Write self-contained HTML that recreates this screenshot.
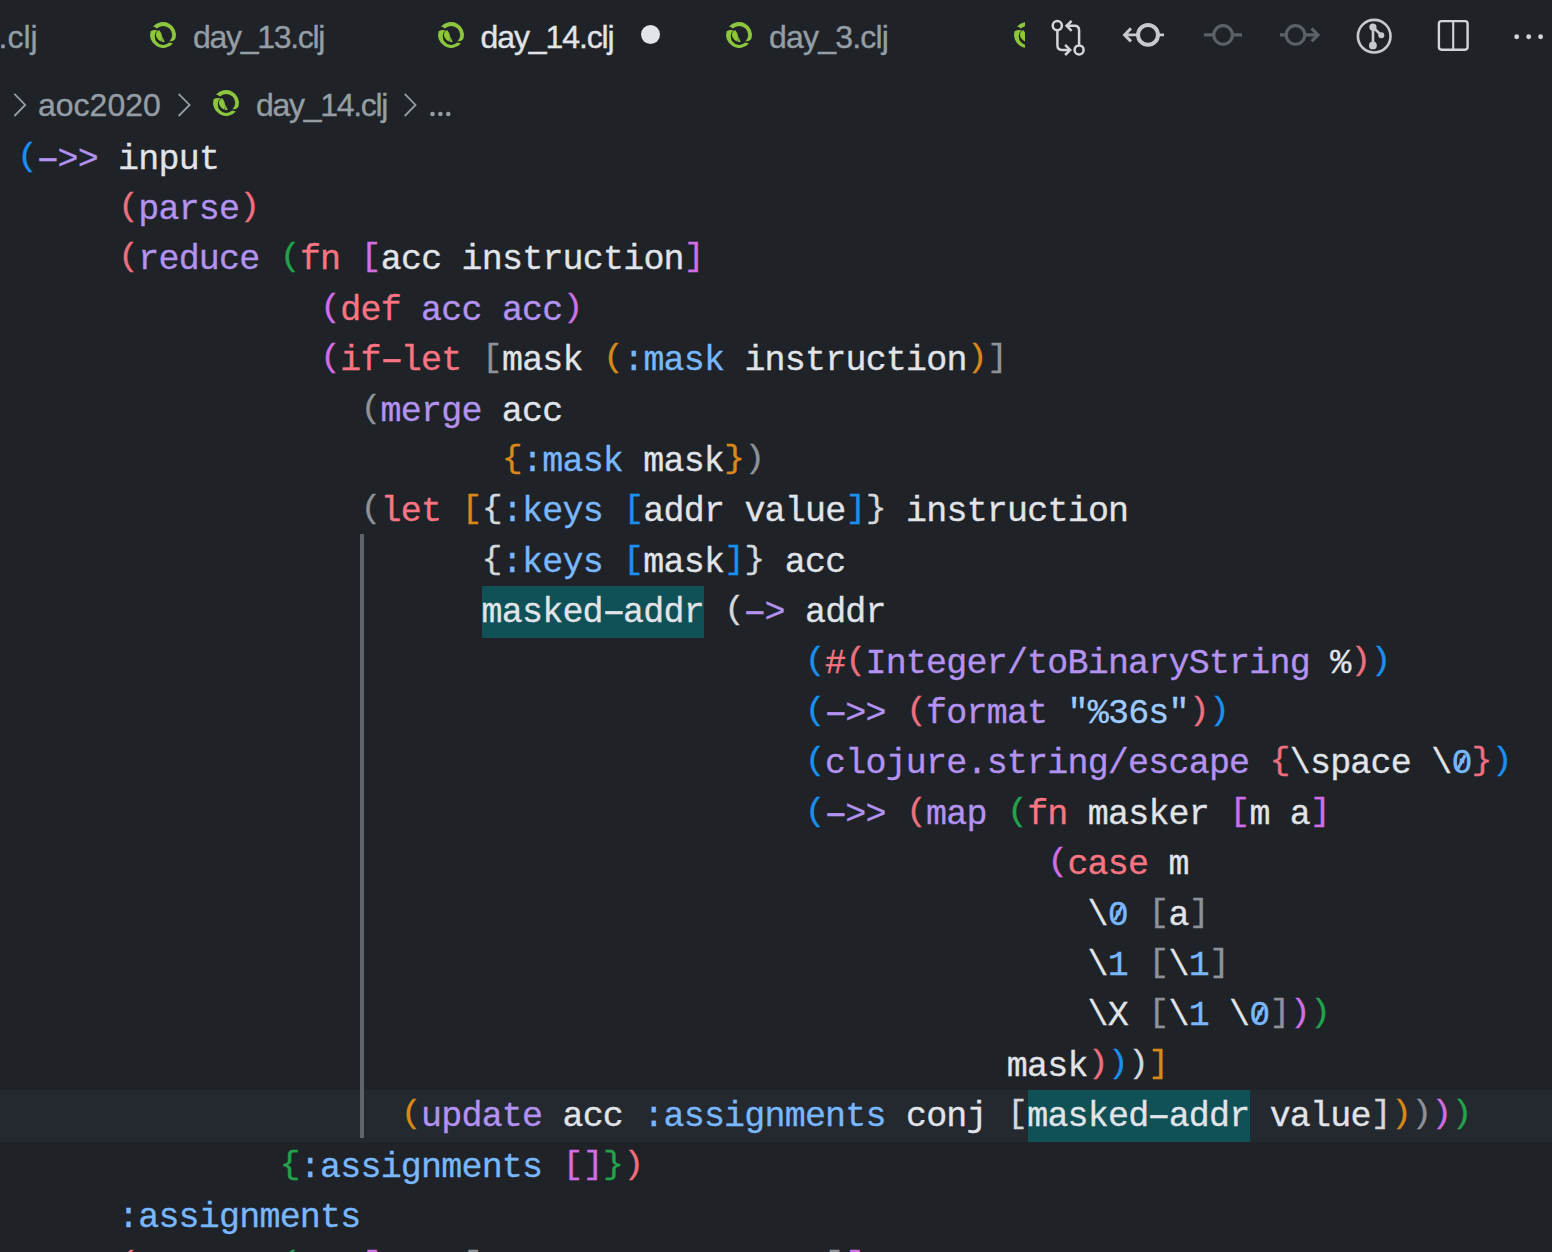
<!DOCTYPE html>
<html><head><meta charset="utf-8">
<style>
html,body{margin:0;padding:0;}
body{width:1552px;height:1252px;overflow:hidden;background:#1f2328;position:relative;font-family:"Liberation Sans",sans-serif;}
.g{color:#959da5}.w{color:#e1e4e8}
.ui{position:absolute;white-space:pre;font-family:"Liberation Sans",sans-serif;font-size:32px;line-height:40px;-webkit-text-stroke:0.35px currentColor;}
.code{position:absolute;left:17px;top:0;font-family:"Liberation Mono",monospace;font-size:35px;letter-spacing:-0.8px;color:#e1e4e8;-webkit-text-stroke:0.3px currentColor;}
.ln{position:absolute;left:0;white-space:pre;height:50.3px;line-height:50.3px;}
.hl{position:absolute;left:0;width:1552px;background:#242930;}
.guide{position:absolute;background:#5f646a;}
.wh{position:absolute;background:#0f5156;}
/* token colors */
.k{color:#f97583}.f{color:#b392f0}.c{color:#79b8ff}.s{color:#9ecbff}.t{color:#e1e4e8}
.b0{color:#1a90f0}.b1{color:#ee6f80}.b2{color:#22a34c}.b3{color:#d06ee4}.b4{color:#8e9298}.b5{color:#d9891a}.b6{color:#d4d7db}
svg{position:absolute;overflow:visible}
.hy{display:inline-block;transform:scaleX(1.75)}
.z{position:relative}.z::after{content:"";position:absolute;left:8.9px;top:9.6px;width:2.8px;height:16px;background:currentColor;transform:rotate(28deg)}
.b0,.b1,.b2,.b3,.b4,.b5,.b6{display:inline-block;transform:translateY(-1.5px) scaleY(0.9);transform-origin:50% 6px}
</style></head><body>
<svg width="0" height="0" style="position:absolute;left:0;top:0">
<defs>
<symbol id="clj" viewBox="0 0 26 26" overflow="visible">
<path fill="#8cc63f" d="M3.1 4.6 A13 13 0 0 1 25.6 16.2 Q24.4 19.4 19.6 19.3 A8.5 8.5 0 1 0 6.8 6.6 Q5.4 5.2 3.1 4.6Z"/>
<path fill="#8cc63f" d="M22.9 21.4 A13 13 0 0 1 0.6 9.2 Q3.2 7.4 7.4 8.2 A8.5 8.5 0 0 0 19.2 20.6 Q21.2 21.4 22.9 21.4Z"/>
<path fill="#8cc63f" d="M9 7.9 C4.6 10.5 4.6 16 11.4 19.8 C12.8 15 12 11 9 7.9Z"/>
<path fill="#8cc63f" d="M12.3 14.2 L14.7 19.9 L12.1 19.9Z"/>
</symbol>
</defs></svg>
<!-- tab bar -->
<div class="ui g" style="left:-1.5px;top:17px">.clj</div>
<svg class="clj" style="left:150px;top:22px" width="26" height="26" viewBox="0 0 26 26"><use href="#clj"/></svg>
<div class="ui g" style="left:193px;top:17px;letter-spacing:-1.3px">day_13.clj</div>
<svg class="clj" style="left:438px;top:22px" width="26" height="26" viewBox="0 0 26 26"><use href="#clj"/></svg>
<div class="ui w" style="left:480.5px;top:17px;letter-spacing:-1.1px">day_14.clj</div>
<div style="position:absolute;left:641px;top:25px;width:19px;height:19px;border-radius:50%;background:#e1e4e8"></div>
<svg class="clj" style="left:726px;top:22px" width="26" height="26" viewBox="0 0 26 26"><use href="#clj"/></svg>
<div class="ui g" style="left:769px;top:17px;letter-spacing:-0.8px">day_3.clj</div>
<svg class="clj" style="left:1014px;top:22px;overflow:hidden" width="10.5" height="26" viewBox="0 0 10.5 26"><use href="#clj" width="26" height="26"/></svg>
<svg style="left:0;top:0" width="1552" height="70" fill="none" stroke-linecap="butt">
<g stroke="#d2d5d9" stroke-width="2.5">
<circle cx="1057.3" cy="25.6" r="4.6"/>
<circle cx="1079.1" cy="49.9" r="4.5"/>
<path d="M1057.4 30.2 V45.2 Q1057.4 49.9 1062 49.9 H1069.4"/>
<path d="M1065.1 44.8 L1070.2 49.9 L1065.1 55"/>
<path d="M1079.1 45.3 V30.4 Q1079.1 25.8 1074.5 25.8 H1067"/>
<path d="M1071.6 20.8 L1066.6 25.8 L1071.6 30.8"/>
</g>
<g stroke="#c6c9ce" stroke-width="2.9">
<circle cx="1148" cy="34.9" r="9.95" stroke-width="4"/>
<path d="M1125 34.9 H1138.5 M1158 34.9 H1164"/>
<path d="M1131 28.4 L1124.5 34.9 L1131 41.4"/>
</g>
<g stroke="#5c6168" stroke-width="3.1">
<circle cx="1223.1" cy="34.9" r="9.3"/>
<path d="M1204 34.9 H1213.8 M1232.4 34.9 H1242"/>
<circle cx="1295.5" cy="34.9" r="9.3"/>
<path d="M1280 34.9 H1286.2 M1304.8 34.9 H1317"/>
<path d="M1311.6 28.4 L1318 34.9 L1311.6 41.4"/>
</g>
<g stroke="#c6c9ce" stroke-width="2.6">
<circle cx="1374.2" cy="36.2" r="16.3"/>
<path d="M1373 27.1 V45.4 M1372.9 27.1 L1381.3 35.2"/>
</g>
<g fill="#c6c9ce">
<circle cx="1372.9" cy="27.1" r="3.6"/>
<circle cx="1381.3" cy="35.2" r="3.0"/>
<circle cx="1372.9" cy="45.4" r="3.9"/>
</g>
<g stroke="#d2d5d9" stroke-width="2.4">
<rect x="1438.9" y="21.1" width="28.7" height="28.6" rx="2.6"/>
<path d="M1453.2 21.1 V49.7" stroke-width="2.1"/>
</g>
<g fill="#d2d5d9">
<circle cx="1516.7" cy="36.8" r="2.45"/>
<circle cx="1528.7" cy="36.8" r="2.45"/>
<circle cx="1540.6" cy="36.8" r="2.45"/>
</g>
<g stroke="#959da5" stroke-width="1.8">
<path d="M14.4 93.8 L25.2 104.9 L14.4 116"/>
<path d="M178.6 93.8 L189.6 104.9 L178.6 116"/>
<path d="M404.7 93.8 L415.5 104.9 L404.7 116"/>
</g>
<g fill="#959da5">
<circle cx="432.5" cy="114" r="2.3"/>
<circle cx="440.4" cy="114" r="2.3"/>
<circle cx="448.3" cy="114" r="2.3"/>
</g>
</svg>
<!-- breadcrumb -->
<div class="ui g" style="left:38px;top:85px">aoc2020</div>
<svg class="clj" style="left:213px;top:90px" width="26" height="26" viewBox="0 0 26 26"><use href="#clj"/></svg>
<div class="ui g" style="left:256px;top:85px;letter-spacing:-1.3px">day_14.clj</div>
<!-- current line highlight -->
<div class="hl" style="top:1090px;height:51.5px"></div>
<!-- indent guide -->
<div class="guide" style="left:360px;top:534px;width:4px;height:604px"></div>
<!-- word highlights -->
<div class="wh" style="left:481.8px;top:586px;width:222px;height:51.5px"></div>
<div class="wh" style="left:1028.2px;top:1090px;width:222px;height:51.5px"></div>

<div class="code" id="code">
<div class="ln" style="top:134.5px;left:0.0px"><span class="b0">(</span><span class="f"><span class="hy">-</span>&gt;&gt;</span> input</div>
<div class="ln" style="top:184.9px;left:101.0px"><span class="b1">(</span><span class="f">parse</span><span class="b1">)</span></div>
<div class="ln" style="top:235.3px;left:101.0px"><span class="b1">(</span><span class="f">reduce</span> <span class="b2">(</span><span class="k">fn</span> <span class="b3">[</span>acc instruction<span class="b3">]</span></div>
<div class="ln" style="top:285.7px;left:303.0px"><span class="b3">(</span><span class="k">def</span> <span class="f">acc acc</span><span class="b3">)</span></div>
<div class="ln" style="top:336.1px;left:303.0px"><span class="b3">(</span><span class="k">if<span class="hy">-</span>let</span> <span class="b4">[</span>mask <span class="b5">(</span><span class="c">:mask</span> instruction<span class="b5">)</span><span class="b4">]</span></div>
<div class="ln" style="top:386.5px;left:343.4px"><span class="b4">(</span><span class="f">merge</span> acc</div>
<div class="ln" style="top:436.9px;left:484.8px"><span class="b5">{</span><span class="c">:mask</span> mask<span class="b5">}</span><span class="b4">)</span></div>
<div class="ln" style="top:487.3px;left:343.4px"><span class="b4">(</span><span class="k">let</span> <span class="b5">[</span><span class="b6">{</span><span class="c">:keys</span> <span class="b0">[</span>addr value<span class="b0">]</span><span class="b6">}</span> instruction</div>
<div class="ln" style="top:537.7px;left:464.6px"><span class="b6">{</span><span class="c">:keys</span> <span class="b0">[</span>mask<span class="b0">]</span><span class="b6">}</span> acc</div>
<div class="ln" style="top:588.1px;left:464.6px">masked<span class="hy">-</span>addr <span class="b6">(</span><span class="f"><span class="hy">-</span>&gt;</span> addr</div>
<div class="ln" style="top:638.5px;left:787.8px"><span class="b0">(</span><span class="k">#</span><span class="b1">(</span><span class="f">Integer/toBinaryString</span> %<span class="b1">)</span><span class="b0">)</span></div>
<div class="ln" style="top:688.9px;left:787.8px"><span class="b0">(</span><span class="f"><span class="hy">-</span>&gt;&gt;</span> <span class="b1">(</span><span class="f">format</span> <span class="s">&quot;%36s&quot;</span><span class="b1">)</span><span class="b0">)</span></div>
<div class="ln" style="top:739.3px;left:787.8px"><span class="b0">(</span><span class="f">clojure.string/escape</span> <span class="b1">{</span>\space \<span class="c z">0</span><span class="b1">}</span><span class="b0">)</span></div>
<div class="ln" style="top:789.7px;left:787.8px"><span class="b0">(</span><span class="f"><span class="hy">-</span>&gt;&gt;</span> <span class="b1">(</span><span class="f">map</span> <span class="b2">(</span><span class="k">fn</span> masker <span class="b3">[</span>m a<span class="b3">]</span></div>
<div class="ln" style="top:840.1px;left:1030.2px"><span class="b3">(</span><span class="k">case</span> m</div>
<div class="ln" style="top:890.5px;left:1070.6px">\<span class="c z">0</span> <span class="b4">[</span>a<span class="b4">]</span></div>
<div class="ln" style="top:940.9px;left:1070.6px">\<span class="c">1</span> <span class="b4">[</span>\<span class="c">1</span><span class="b4">]</span></div>
<div class="ln" style="top:991.3px;left:1070.6px">\X <span class="b4">[</span>\<span class="c">1</span> \<span class="c z">0</span><span class="b4">]</span><span class="b3">)</span><span class="b2">)</span></div>
<div class="ln" style="top:1041.7px;left:989.8px">mask<span class="b1">)</span><span class="b0">)</span><span class="b6">)</span><span class="b5">]</span></div>
<div class="ln" style="top:1092.1px;left:383.8px"><span class="b5">(</span><span class="f">update</span> acc <span class="c">:assignments</span> conj <span class="b6">[</span>masked<span class="hy">-</span>addr value<span class="b6">]</span><span class="b5">)</span><span class="b4">)</span><span class="b3">)</span><span class="b2">)</span></div>
<div class="ln" style="top:1142.5px;left:262.6px"><span class="b2">{</span><span class="c">:assignments</span> <span class="b3">[]</span><span class="b2">}</span><span class="b1">)</span></div>
<div class="ln" style="top:1192.9px;left:101.0px"><span class="c">:assignments</span></div>
<div class="ln" style="top:1243.3px;left:101.0px"><span class="b1">(</span>       <span class="b2">(</span>   <span class="b3">[</span>    <span class="b4">[</span>                 <span class="b4">]</span><span class="b3">]</span></div>
</div>
</body></html>
